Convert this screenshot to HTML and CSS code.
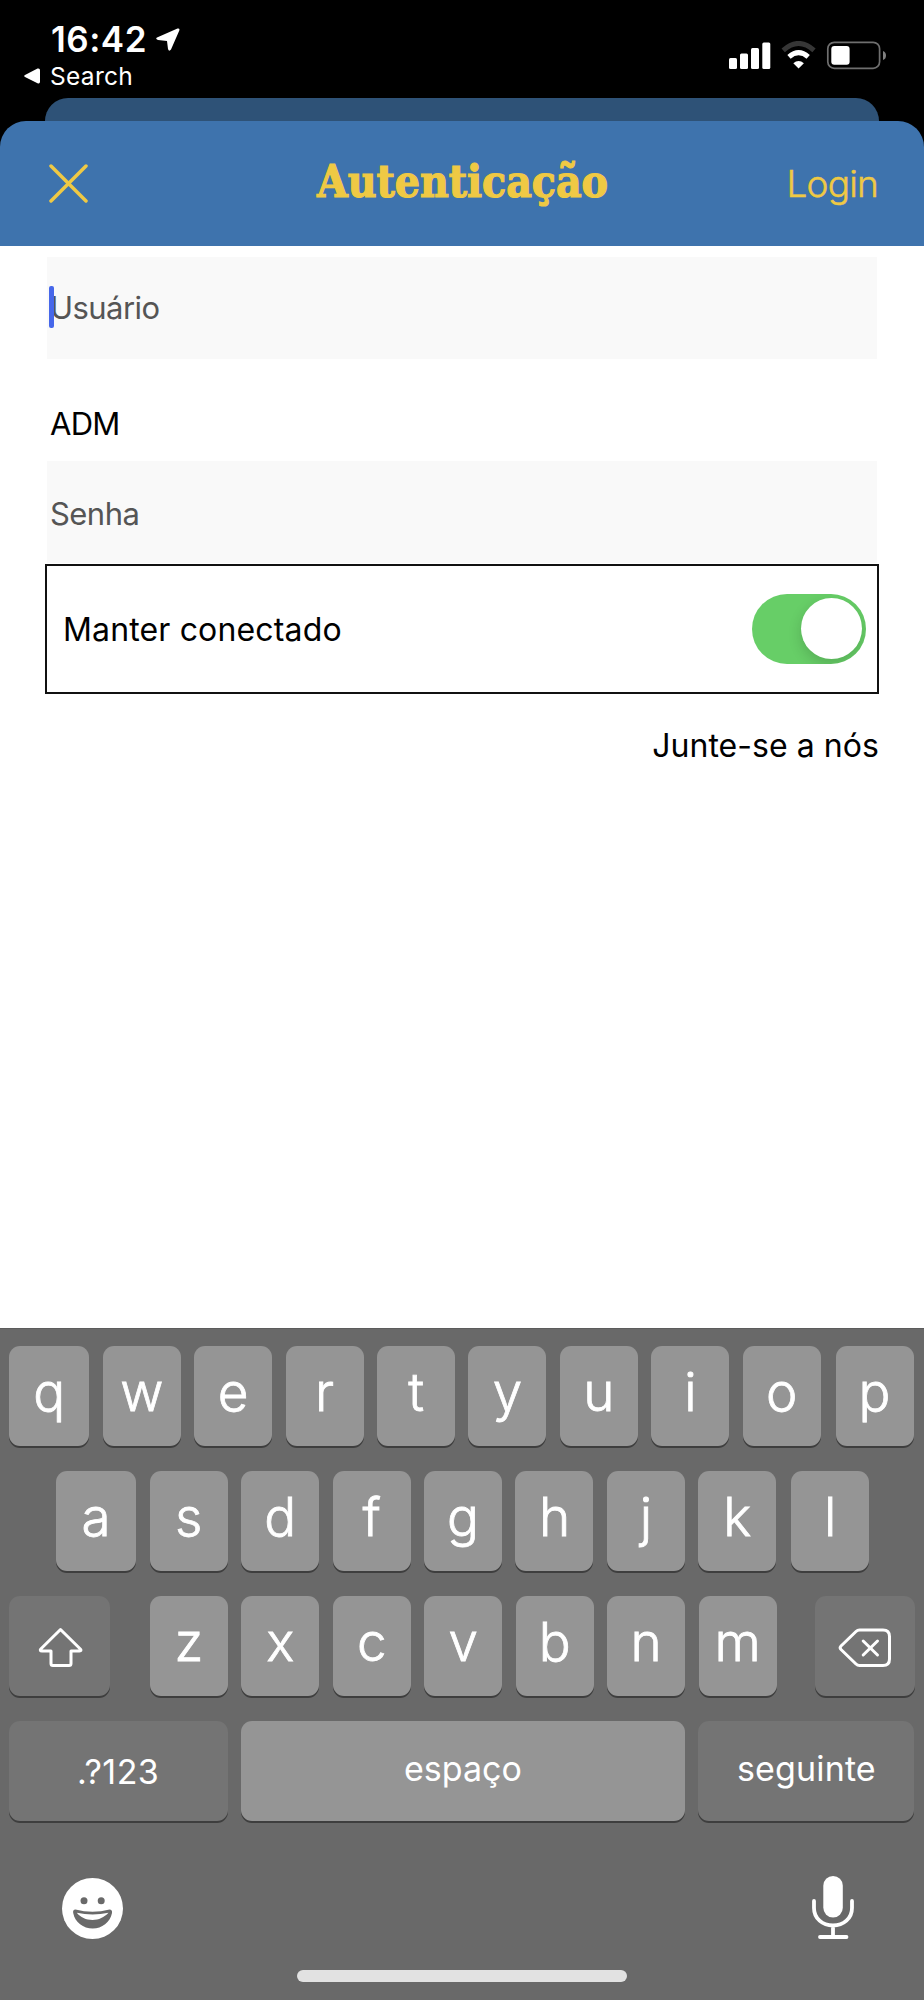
FILE: index.html
```html
<!DOCTYPE html>
<html lang="pt-BR">
<head>
<meta charset="utf-8">
<title>Autenticação</title>
<link rel="stylesheet" href="styles.css">
</head>
<body>
<div class="phone">
  <header class="status">
    <div class="status-left">
      <div class="clock"><span class="time">16:42</span>
        <svg class="location" width="24" height="24" viewBox="0 0 24 24"><path d="M1 9.500 21.500 .5Q24 0 23.300 2.500L15 21.600Q13 24 12 21L11 13 2 12Q-1 11 1 9.500Z" fill="#fff"/></svg>
      </div>
      <div class="back">
        <svg width="16" height="16" viewBox="0 0 16 16"><path d="M1 7 13.500 .6Q16 0 16 2.200V13.800Q16 16 13.500 15.200L1 9Q-.6 8 1 7Z" fill="#fff"/></svg>
        <span class="back-label">Search</span>
      </div>
    </div>
    <svg class="indicators" width="160" height="30" viewBox="0 0 160 30">
      <g fill="#fff">
        <rect x="0" y="17" width="8" height="11" rx="1.500"/>
        <rect x="11" y="12.500" width="8" height="15.500" rx="1.500"/>
        <rect x="22" y="7" width="8" height="21" rx="1.500"/>
        <rect x="33.300" y="1.500" width="8" height="26.500" rx="1.500"/>
        <path d="M69.600 27.600 64.300 22.300Q69.600 17.900 74.900 22.300Z"/>
      </g>
      <path d="M54.200 9.300Q69.600-4.300 85 9.300" fill="none" stroke="#363636" stroke-width="5"/>
      <path d="M60 15.800Q69.600 7.500 79.200 15.800" fill="none" stroke="#fff" stroke-width="5"/>
      <rect x="98.800" y="1.300" width="51.800" height="26" rx="6.500" fill="none" stroke="#6f6f6f" stroke-width="1.700"/>
      <rect x="102.300" y="5" width="18.300" height="18.700" rx="3" fill="#fff"/>
      <path d="M154 10Q157 11 157 14.500T154 19Z" fill="#808080"/>
    </svg>
  </header>
  <div class="sheet-behind"></div>
  <nav class="navbar">
    <svg class="close" width="39" height="39" viewBox="0 0 39 39"><path d="M2 2 37 37M37 2 2 37" stroke="#efc944" stroke-width="3.500" stroke-linecap="round"/></svg>
    <h1 class="title">Autenticação</h1>
    <span class="login">Login</span>
  </nav>
  <main class="form">
    <div class="field field-user"><span class="caret"></span><span class="ph-user">Usuário</span></div>
    <div class="domain">ADM</div>
    <div class="field field-pass"><span class="ph-pass">Senha</span></div>
    <div class="remember">
      <span class="remember-label">Manter conectado</span>
      <span class="switch"><span class="knob"></span></span>
    </div>
    <a class="join">Junte-se a nós</a>
  </main>
  <section class="keyboard">
    <div class="row"><span class="key wide">q</span><span class="key">w</span><span class="key">e</span><span class="key">r</span><span class="key">t</span><span class="key">y</span><span class="key">u</span><span class="key">i</span><span class="key">o</span><span class="key last">p</span></div>
    <div class="row row-home"><span class="key wide">a</span><span class="key">s</span><span class="key">d</span><span class="key">f</span><span class="key">g</span><span class="key">h</span><span class="key">j</span><span class="key">k</span><span class="key last">l</span></div>
    <div class="row">
      <span class="key dark shift"><svg width="46" height="42" viewBox="0 0 46 42"><path d="M22.500 2.500 2.800 22Q1.300 24 4 24H13V36.500Q13 38.500 15 38.500H31Q33 38.500 33 36.500V24H41.500Q44 24 42.300 22Z" fill="none" stroke="#fff" stroke-width="3" stroke-linejoin="round"/></svg></span>
      <span class="key">z</span><span class="key">x</span><span class="key">c</span><span class="key">v</span><span class="key">b</span><span class="key">n</span><span class="key">m</span>
      <span class="key dark delete"><svg width="54" height="40" viewBox="0 0 54 40"><path d="M21.500 2H45Q51.500 2 51.500 8.500V31Q51.500 37.500 45 37.500H21.500Q19.500 37.500 18 36L3 21.500Q1.300 19.800 3 18L18 3.500Q19.500 2 21.500 2Z" fill="none" stroke="#fff" stroke-width="3"/><path d="M25.200 13 39.500 27M39.500 13 25.200 27" stroke="#fff" stroke-width="3" stroke-linecap="round"/></svg></span>
    </div>
    <div class="row">
      <span class="key dark numbers">.?123</span>
      <span class="key space">espaço</span>
      <span class="key dark next">seguinte</span>
    </div>
    <div class="tools">
      <svg width="61" height="61" viewBox="0 0 61 61"><circle cx="30.500" cy="30.500" r="30.500" fill="#fff"/><g fill="#696969"><circle cx="22" cy="22.700" r="3.500"/><circle cx="39.200" cy="22.700" r="3.500"/><path d="M13.500 31.500Q30.500 36 47.500 31.500Q50.500 31.500 50 35C48 44.500 40 50.500 30.700 50.500S13 44.500 11.200 35Q10.500 31.500 13.500 31.500Z"/></g><path d="M14.800 34.800Q30.500 38 46.500 34.800C42 39.500 37 42 30.500 42S18.500 39.500 14.800 34.800Z" fill="#fff"/></svg>
      <svg width="42" height="64" viewBox="0 0 42 64"><rect x="11.300" y="0" width="19.500" height="41.500" rx="9.750" fill="#fff"/><path d="M2 25V32C2 42.500 10.500 49.500 21 49.500S40 42.500 40 32V25M21 50V60M8 61H34.500" fill="none" stroke="#fff" stroke-width="3.800" stroke-linecap="round"/></svg>
    </div>
    <div class="home-bar"></div>
  </section>
</div>
</body>
</html>
```
FILE: styles.css
```css
* { box-sizing: border-box; }
body { margin: 0; background: #000; font-family: Inter, "Liberation Sans", sans-serif; }
.phone { width: 924px; height: 2000px; display: flex; flex-direction: column; overflow: hidden; background: #000; }
.status { height: 98px; flex: none; display: flex; justify-content: space-between; padding: 0 35px 0 24px; color: #fff; }
.status-left { padding-top: 19px; }
.clock { display: flex; align-items: center; gap: 9px; padding-left: 27px; height: 40px; }
.time { font-size: 35px; font-weight: 600; letter-spacing: 0.5px; }
.location { margin-top: 1px; }
.back { display: flex; align-items: center; gap: 10px; height: 34px; }
.back-label { font-size: 24.500px; font-weight: 400; letter-spacing: 0.3px; }
.indicators { margin-top: 41px; }
.sheet-behind { height: 23px; flex: none; margin: 0 45px; background: #2e5277; border-radius: 23px 23px 0 0; }
.navbar { height: 125px; flex: none; display: grid; grid-template-columns: 1fr auto 1fr; align-items: center; padding: 0 46px 0 49px; background: #3e73ad; border-radius: 26px 26px 0 0; color: #efc944; }
.title { margin: 0 2px 0 0; padding-bottom: 4px; font-family: "DejaVu Serif Condensed", "DejaVu Serif", serif; font-stretch: condensed; font-size: 44px; font-weight: 700; letter-spacing: 0; line-height: 60px; white-space: nowrap; -webkit-text-stroke: 1.2px #efc944; }
.login { justify-self: end; font-size: 37px; font-weight: 300; letter-spacing: -0.8px; -webkit-text-stroke: 0.5px #efc944; }
.form { flex: 1; background: #fff; padding: 11px 45px 0; display: flex; flex-direction: column; font-size: 31px; color: #000; }
.field { margin: 0 2px; background: #f9f9f9; color: #555; display: flex; align-items: center; padding-left: 3px; letter-spacing: -0.55px; }
.field-user { height: 102px; position: relative; padding-bottom: 2px; }
.caret { position: absolute; left: 2px; top: 29px; width: 5px; height: 42px; border-radius: 2px; background: #4667ea; }
.domain { height: 102px; padding: 44px 0 0 5px; line-height: 42px; letter-spacing: -0.7px; }
.field-pass { height: 102px; padding-top: 3px; }
.remember { height: 130px; margin-top: 1px; border: 2px solid #111; display: flex; align-items: center; justify-content: space-between; padding: 0 11px 0 16px; font-size: 32px; letter-spacing: 0.15px; }
.switch { width: 114px; height: 70px; border-radius: 35px; background: #67ce67; display: flex; justify-content: flex-end; padding: 4px; overflow: hidden; }
.knob { width: 61px; height: 61px; border-radius: 50%; background: #fff; box-shadow: 0 5px 14px rgba(0,0,0,.16); }
.join { align-self: flex-end; line-height: 40px; margin-top: 32px; font-size: 32px; letter-spacing: 0.05px; }
.keyboard { height: 672px; flex: none; background: #696969; padding: 17px 9px 0; display: flex; flex-direction: column; gap: 25px; color: #fff; border-top: 1px solid #5c5c5c; }
.row { display: flex; gap: 13.450px; height: 100px; flex: none; }
.row-home { padding-left: 47px; }
.key { width: 78px; height: 100px; flex: none; border-radius: 11px; background: #959595; box-shadow: 0 2px 0 #3e3e3e; display: flex; align-items: center; justify-content: center; padding-bottom: 8px; font-size: 53px; font-weight: 300; -webkit-text-stroke: 0.8px #fff; }
.wide { width: 80.300px; }
.last { margin-left: 1.300px; }
.dark { background: #747474; }
.shift { width: 100.500px; margin-right: 27px; padding: 3px 0 0 3px; }
.delete { width: 100px; margin-left: 24.500px; padding: 3px 0 0 1px; }
.numbers, .space, .next { font-size: 34px; font-weight: 400; -webkit-text-stroke: 0; }
.numbers { width: 218.500px; padding: 0; letter-spacing: 0.5px; }
.space { width: 444px; padding: 0 0 5px; }
.next { width: 216px; padding: 0 0 5px; letter-spacing: 0.15px; }
.tools { height: 64px; margin-top: 30px; padding: 0 61px 0 53px; display: flex; justify-content: space-between; align-items: center; }
.home-bar { width: 330px; height: 12px; flex: none; margin: 5px auto 0; border-radius: 6px; background: #e2e2e2; }
```
